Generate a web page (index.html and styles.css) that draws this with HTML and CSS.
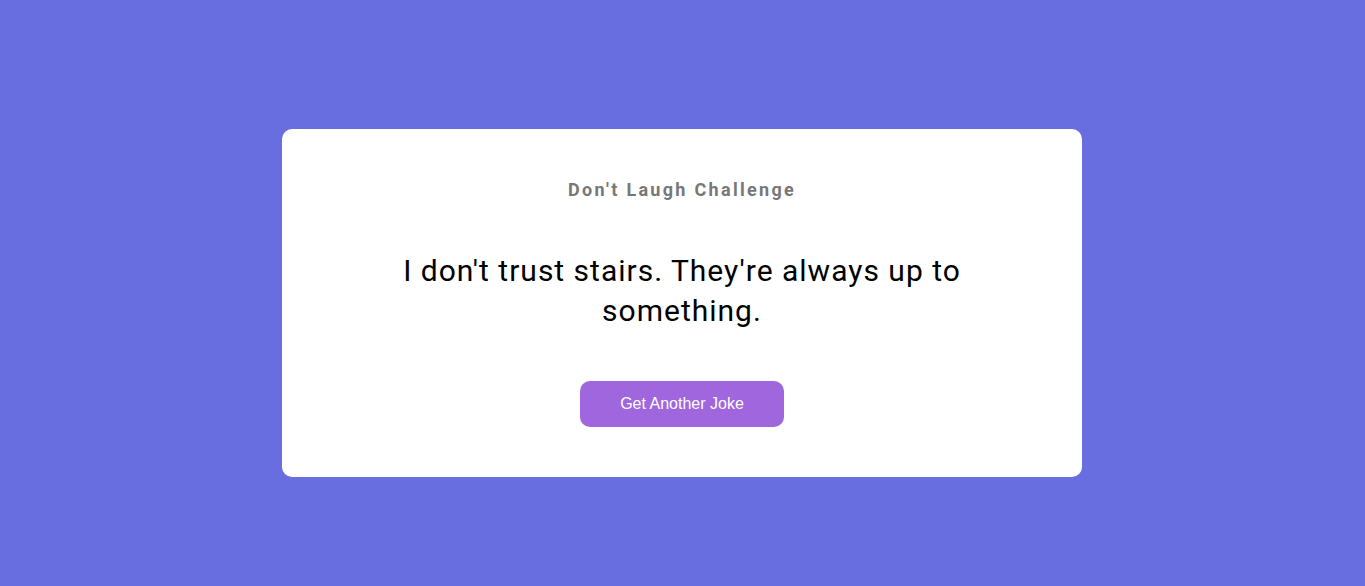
FILE: index.html
```html
<!DOCTYPE html>
<html>
<head>
<meta charset="utf-8">
<link rel="stylesheet" href="styles.css">
</head>
<body>
<main class="page">
  <section class="card">
    <h1 class="title">Don't Laugh Challenge</h1>
    <p class="joke">I don't trust stairs. They're always up to something.</p>
    <button class="btn">Get Another Joke</button>
  </section>
</main>
</body>
</html>
```
FILE: styles.css
```css
html, body {
  margin: 0;
  padding: 0;
}
body {
  background: #686de0;
  font-family: Roboto, "Liberation Sans", sans-serif;
}
.page {
  min-height: 100vh;
  box-sizing: border-box;
  padding-top: 20px;
  padding-right: 1px;
  display: flex;
  align-items: center;
  justify-content: center;
}
.card {
  width: 800px;
  box-sizing: border-box;
  background: #fff;
  border-radius: 10px;
  padding: 50px 40px;
  display: flex;
  flex-direction: column;
  align-items: center;
  text-align: center;
}
.title {
  margin: 0;
  font-size: 18px;
  line-height: 21.6px;
  font-weight: 700;
  letter-spacing: 2.3px;
  color: #777;
}
.joke {
  margin: 50px 0;
  max-width: 600px;
  font-size: 30px;
  line-height: 40px;
  letter-spacing: 1px;
  color: #000;
}
.btn {
  font-family: "Liberation Sans", Arial, sans-serif;
  font-size: 16px;
  color: #fff;
  background: #a066dd;
  border: none;
  border-radius: 10px;
  padding: 14px 40px;
  cursor: pointer;
}
```
